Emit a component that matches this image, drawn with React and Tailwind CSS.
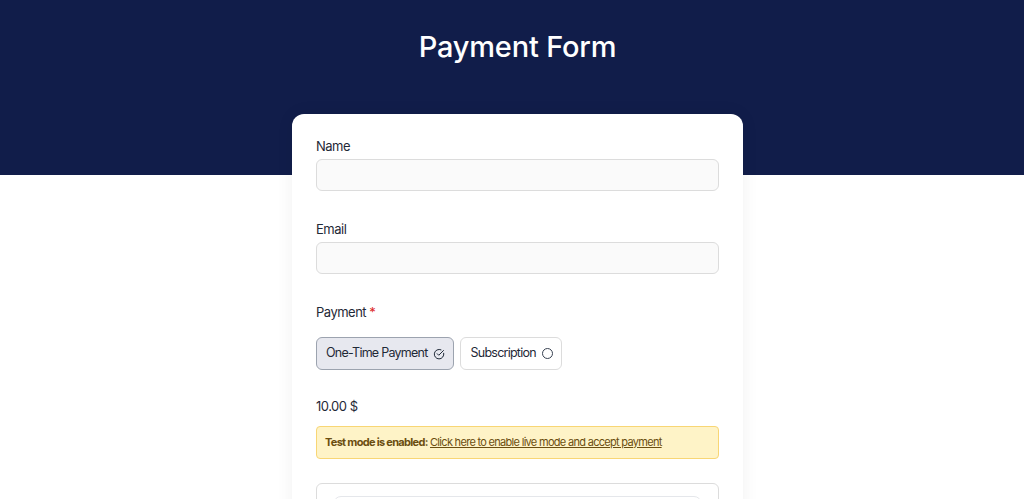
import * as React from 'react';

function CheckCircle() {
  return (
    <svg width="12" height="12" viewBox="0 0 24 24" fill="none" stroke="currentColor" strokeWidth="2" strokeLinecap="round" strokeLinejoin="round">
      <path d="M21.5 10.5A9.5 9.5 0 1 1 16 3.6" />
      <path d="M8.5 11.5l3 3L21 5" />
    </svg>
  );
}

function Field({ label }) {
  return (
    <div className="flex flex-col gap-[3px]">
      <label className="text-[13px] leading-5 tracking-[-0.5px] text-[#1f2937]">{label}</label>
      <input className="h-[32px] w-full rounded-[6px] border border-[#dcdcdc] bg-[#fafafa] px-3 text-sm outline-none" />
    </div>
  );
}

export default function App() {
  return (
    <div className="h-[499px] overflow-hidden bg-white pl-[11px] font-['Inter','Noto_Sans',sans-serif]">
      <div className="-ml-[11px] h-[175px] bg-[#111d4a] pl-[11px] pt-[26px] text-center">
        <h1 className="text-[29px] font-medium leading-[42px] tracking-[-0.2px] text-white">Payment Form</h1>
      </div>
      <div className="-mt-[61px] flex justify-center">
        <div className="w-[451px] rounded-[12px] bg-white px-6 pt-[22px] pb-6 shadow-[0_0_18px_rgba(0,0,0,0.06)]">
          <div className="flex flex-col gap-[28px]">
            <Field label="Name" />
            <Field label="Email" />
            <div className="flex flex-col gap-[15px]">
              <div className="text-[13px] leading-5 tracking-[-0.5px] text-[#1f2937]">
                Payment<span className="ml-[3px] text-[#dc2626]">*</span>
              </div>
              <div className="flex gap-[6px]">
                <button className="flex h-[33px] items-center gap-[6px] rounded-[6px] border border-[#9ca3af] bg-[#e7e8ef] pl-[9px] pr-[8px] text-[12.5px] tracking-[-0.75px] text-[#1f2937]">
                  One-Time Payment
                  <CheckCircle />
                </button>
                <button className="flex h-[33px] items-center gap-[6px] rounded-[6px] border border-[#dcdcdc] bg-white pl-[9px] pr-[8px] text-[12.5px] tracking-[-0.75px] text-[#1f2937]">
                  Subscription
                  <span className="h-[11px] w-[11px] rounded-full border border-[#374151]"></span>
                </button>
              </div>
            </div>
            <div className="-mt-[2px] flex flex-col gap-[10px]">
              <div className="text-[13px] leading-5 tracking-[-0.5px] text-[#1f2937]">10.00 $</div>
              <div className="h-[33px] whitespace-nowrap rounded-[4px] border border-[#f8d675] bg-[#fef3c7] px-[8px] text-[11px] leading-[31px] tracking-[-0.7px] text-[#6b4e10]">
                <span className="font-bold">Test mode is enabled:</span>{' '}
                <a href="#" className="underline">Click here to enable live mode and accept payment</a>
              </div>
            </div>
            <div className="-mt-[4px] h-[80px] rounded-[6px] border border-[#dcdcdc] px-4 pt-3">
              <div className="h-[40px] rounded-[8px] border border-[#e5e7eb]"></div>
            </div>
          </div>
        </div>
      </div>
    </div>
  );
}
